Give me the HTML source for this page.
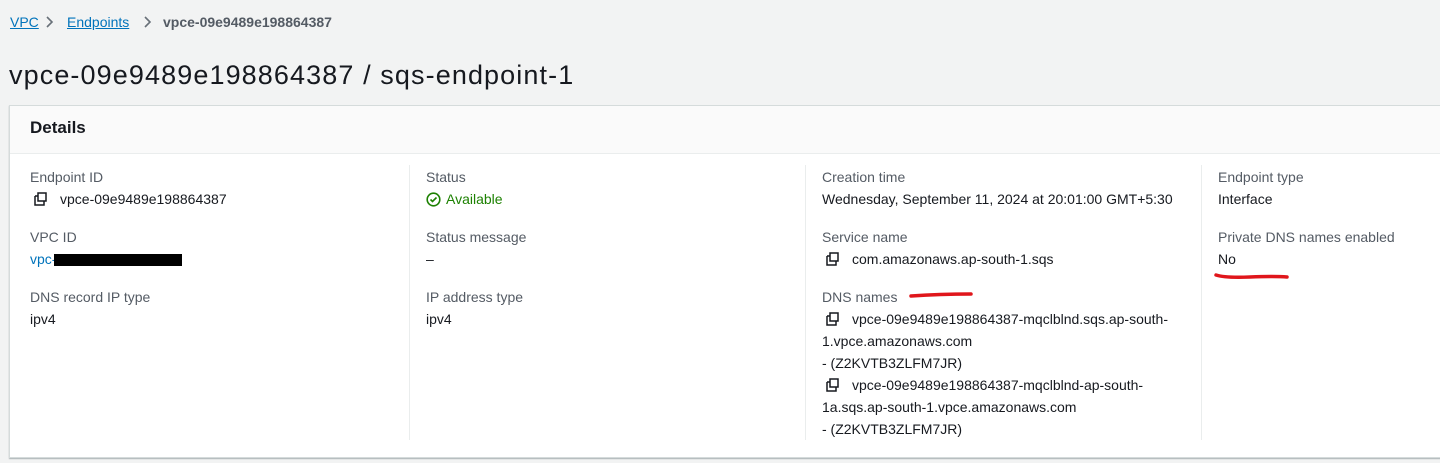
<!DOCTYPE html>
<html><head><meta charset="utf-8"><style>
*{margin:0;padding:0;box-sizing:border-box}
body{width:1440px;height:463px;background:#f2f3f3;font-family:"Liberation Sans",Arial,sans-serif;position:relative;overflow:hidden;color:#16191f}
.a{position:absolute;white-space:nowrap;font-size:14px;line-height:22px}
.lk{color:#0073bb}
.lb{color:#545b64}
.card{position:absolute;left:9px;top:105px;width:1440px;height:353px;background:#fff;border:1px solid #d5dbdb;border-right:none;box-shadow:0 1px 1px rgba(0,28,36,.3)}
.hd{position:absolute;left:0;top:0;right:0;height:48px;background:#fafafa;border-bottom:1px solid #eaeded}
.dv{position:absolute;top:165px;width:1px;height:275px;background:#eaeded}
.cp{display:inline-block;width:14px;height:14px;vertical-align:-2px;margin-right:12px}
</style></head><body>
<div class="a" style="left:10px;top:11px"><span class="lk" style="text-decoration:underline">VPC</span></div>
<svg class="a" style="left:45px;top:16px" width="10" height="12"><path d="M2 1l5 5-5 5" stroke="#687078" stroke-width="1.6" fill="none"/></svg>
<div class="a" style="left:67px;top:11px"><span class="lk" style="text-decoration:underline">Endpoints</span></div>
<svg class="a" style="left:143px;top:16px" width="10" height="12"><path d="M2 1l5 5-5 5" stroke="#687078" stroke-width="1.6" fill="none"/></svg>
<div class="a" style="left:163px;top:11px;color:#545b64;font-weight:bold;font-size:14px">vpce-09e9489e198864387</div>
<div class="a" style="left:9px;top:58px;font-size:27px;line-height:34px;letter-spacing:1.1px">vpce-09e9489e198864387 / sqs-endpoint-1</div>
<div class="card"><div class="hd"></div></div>
<div class="a" style="left:30px;top:117px;font-size:17px;font-weight:bold">Details</div>
<div class="dv" style="left:409px"></div><div class="dv" style="left:805px"></div><div class="dv" style="left:1201px"></div>

<div class="a lb" style="left:30px;top:166px">Endpoint ID</div>
<div class="a" style="left:34px;top:188px"><svg class="cp" viewBox="0 0 14 14"><path d="M4 1h8v8H4zM1 4h3M1 4v9h9v-4" stroke="#16191f" stroke-width="1.5" fill="none"/></svg>vpce-09e9489e198864387</div>
<div class="a lb" style="left:30px;top:226px">VPC ID</div>
<div class="a lk" style="left:30px;top:248px">vpc-</div>
<div style="position:absolute;left:54px;top:254px;width:128px;height:12px;background:#000"></div>
<div class="a lb" style="left:30px;top:286px">DNS record IP type</div>
<div class="a" style="left:30px;top:308px">ipv4</div>

<div class="a lb" style="left:426px;top:166px">Status</div>
<div class="a" style="left:426px;top:188px;color:#1d8102"><svg style="display:inline-block;vertical-align:-3px;margin-right:5px" width="15" height="15" viewBox="0 0 15 15"><circle cx="7.5" cy="7.5" r="6.3" stroke="#1d8102" stroke-width="1.6" fill="none"/><path d="M4.5 7.5l2 2 4-4" stroke="#1d8102" stroke-width="1.6" fill="none"/></svg>Available</div>
<div class="a lb" style="left:426px;top:226px">Status message</div>
<div class="a" style="left:426px;top:248px">–</div>
<div class="a lb" style="left:426px;top:286px">IP address type</div>
<div class="a" style="left:426px;top:308px">ipv4</div>

<div class="a lb" style="left:822px;top:166px">Creation time</div>
<div class="a" style="left:822px;top:188px">Wednesday, September 11, 2024 at 20:01:00 GMT+5:30</div>
<div class="a lb" style="left:822px;top:226px">Service name</div>
<div class="a" style="left:826px;top:248px"><svg class="cp" viewBox="0 0 14 14"><path d="M4 1h8v8H4zM1 4h3M1 4v9h9v-4" stroke="#16191f" stroke-width="1.5" fill="none"/></svg>com.amazonaws.ap-south-1.sqs</div>
<div class="a lb" style="left:822px;top:286px">DNS names</div>
<div class="a" style="left:826px;top:308px"><svg class="cp" viewBox="0 0 14 14"><path d="M4 1h8v8H4zM1 4h3M1 4v9h9v-4" stroke="#16191f" stroke-width="1.5" fill="none"/></svg>vpce-09e9489e198864387-mqclblnd.sqs.ap-south-</div>
<div class="a" style="left:822px;top:330px">1.vpce.amazonaws.com</div>
<div class="a" style="left:822px;top:352px">- (Z2KVTB3ZLFM7JR)</div>
<div class="a" style="left:826px;top:374px"><svg class="cp" viewBox="0 0 14 14"><path d="M4 1h8v8H4zM1 4h3M1 4v9h9v-4" stroke="#16191f" stroke-width="1.5" fill="none"/></svg>vpce-09e9489e198864387-mqclblnd-ap-south-</div>
<div class="a" style="left:822px;top:396px">1a.sqs.ap-south-1.vpce.amazonaws.com</div>
<div class="a" style="left:822px;top:418px">- (Z2KVTB3ZLFM7JR)</div>

<div class="a lb" style="left:1218px;top:166px">Endpoint type</div>
<div class="a" style="left:1218px;top:188px">Interface</div>
<div class="a lb" style="left:1218px;top:226px">Private DNS names enabled</div>
<div class="a" style="left:1218px;top:248px">No</div>

<svg style="position:absolute;left:0;top:0" width="1440" height="463"><path d="M911 296Q940 294 971 294" stroke="#e0161b" stroke-width="3.5" stroke-linecap="round" fill="none"/><path d="M1216 275Q1225 278 1250 277T1287 277" stroke="#e0161b" stroke-width="3.5" stroke-linecap="round" fill="none"/></svg>
</body></html>
